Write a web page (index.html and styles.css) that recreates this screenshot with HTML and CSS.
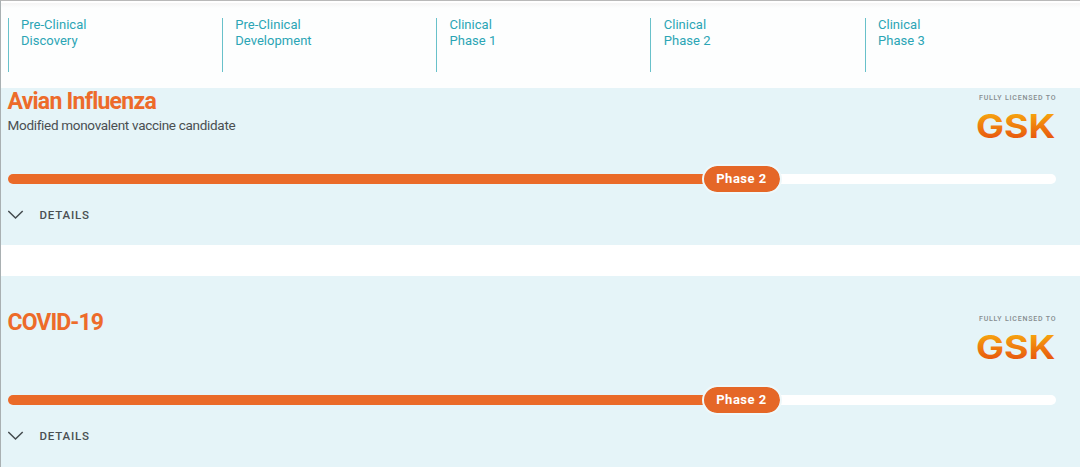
FILE: index.html
```
<!DOCTYPE html>
<html lang="en">
<head>
    <meta charset="UTF-8">
    <meta name="viewport" content="width=device-width, initial-scale=1.0">
    <title>Pipeline</title>
    <link rel="stylesheet" href="styles.css">
</head>
<body>
    <header class="phases">
        <div class="phase">Pre-Clinical<br>Discovery</div>
        <div class="phase">Pre-Clinical<br>Development</div>
        <div class="phase">Clinical<br>Phase 1</div>
        <div class="phase">Clinical<br>Phase 2</div>
        <div class="phase">Clinical<br>Phase 3</div>
    </header>

    <section class="program">
        <div class="info">
            <div>
                <h2 class="title">Avian Influenza</h2>
                <p class="summary">Modified monovalent vaccine candidate</p>
            </div>
            <div class="license">
                <div class="license-label">FULLY LICENSED TO</div>
                <svg class="gsk" width="80" height="42" viewBox="0 -8 80 42">
                    <defs>
                        <linearGradient id="gsk-fill" gradientUnits="userSpaceOnUse" x1="0" y1="1" x2="0" y2="25">
                            <stop offset="0" stop-color="#f6a20f"/>
                            <stop offset="1" stop-color="#e8590e"/>
                        </linearGradient>
                    </defs>
                    <text x="0" y="24.6" textLength="79.5" lengthAdjust="spacingAndGlyphs" fill="url(#gsk-fill)">GSK</text>
                </svg>
            </div>
        </div>
        <div class="track">
            <div class="bar"></div>
            <span class="badge">Phase 2</span>
        </div>
        <div class="details">
            <svg width="16" height="10" viewBox="0 0 16 10"><path d="M0.3 1 L7.5 8 L14.7 1"/></svg>
            <span>DETAILS</span>
        </div>
    </section>

    <section class="program spaced">
        <div class="info">
            <div>
                <h2 class="title covid">COVID-19</h2>
            </div>
            <div class="license">
                <div class="license-label">FULLY LICENSED TO</div>
                <svg class="gsk" width="80" height="42" viewBox="0 -8 80 42">
                    <text x="0" y="24.6" textLength="79.5" lengthAdjust="spacingAndGlyphs" fill="url(#gsk-fill)">GSK</text>
                </svg>
            </div>
        </div>
        <div class="track">
            <div class="bar"></div>
            <span class="badge">Phase 2</span>
        </div>
        <div class="details">
            <svg width="16" height="10" viewBox="0 0 16 10"><path d="M0.3 1 L7.5 8 L14.7 1"/></svg>
            <span>DETAILS</span>
        </div>
    </section>
</body>
</html>
```

FILE: styles.css
```
* {
    box-sizing: border-box;
}
body {
    margin: 0;
    height: 467px;
    overflow: hidden;
    border-top: 1px solid #b9b9b9;
    border-left: 1px solid #a9b0b2;
    background: #fff;
    color: #4a4f52;
    font-family: Roboto, "Open Sans", sans-serif;
}
.phases {
    display: grid;
    grid-template-columns: repeat(5, 214.25px);
    height: 87px;
    padding: 17px 0 0 6.5px;
    background: linear-gradient(#fff 2px, #f5f5f5 2px, #fdfefe 7px);
}
.phase {
    height: 54px;
    padding-left: 12.5px;
    border-left: 1.5px solid #68c1ca;
    color: #2ba5b5;
    font-size: 13px;
    line-height: 15.5px;
    letter-spacing: 0.03px;
}
.phase::before {
    content: "";
    display: block;
    margin-top: -1px;
}
.program {
    height: 157px;
    padding: 0 24px 0 6.5px;
    background: #e5f4f8;
}
.spaced {
    height: 191px;
    margin-top: 31px;
    padding-top: 33px;
}
.info {
    display: flex;
    justify-content: space-between;
    height: 86px;
}
.title {
    margin: 0;
    color: #ed6b2a;
    font-size: 23px;
    line-height: 27px;
    letter-spacing: -0.75px;
}
.covid {
    letter-spacing: -0.9px;
}
.summary {
    margin: 1px 0 0;
    font-size: 13.5px;
    line-height: 18px;
    letter-spacing: -0.3px;
}
.license {
    width: 80px;
    padding-top: 5px;
}
.license-label {
    padding-left: 3px;
    color: #858c8f;
    font-size: 7px;
    font-weight: 500;
    line-height: 11px;
    letter-spacing: 0.8px;
    white-space: nowrap;
}
.gsk {
    display: block;
    margin-top: 1px;
}
.gsk text {
    font-family: Inter, sans-serif;
    font-size: 32px;
    font-weight: 700;
}
.track {
    position: relative;
    height: 10px;
    border-radius: 5px;
    background: #fff;
}
.bar {
    width: 700px;
    height: 10px;
    border-radius: 5px;
    background: #ea6a28;
}
.badge {
    position: absolute;
    top: -10px;
    left: 694px;
    width: 80px;
    height: 30px;
    border: 2px solid #eef8fa;
    border-radius: 15px;
    background: #e56727;
    background-clip: padding-box;
    color: #fff;
    font-size: 13px;
    font-weight: 700;
    line-height: 25px;
    letter-spacing: 0.5px;
    text-align: center;
}
.details {
    display: flex;
    align-items: center;
    gap: 16px;
    height: 20px;
    margin-top: 21px;
    font-size: 11.5px;
    font-weight: 500;
    letter-spacing: 0.8px;
}
.details path {
    fill: none;
    stroke: #444b4e;
    stroke-width: 1.5;
}
```
